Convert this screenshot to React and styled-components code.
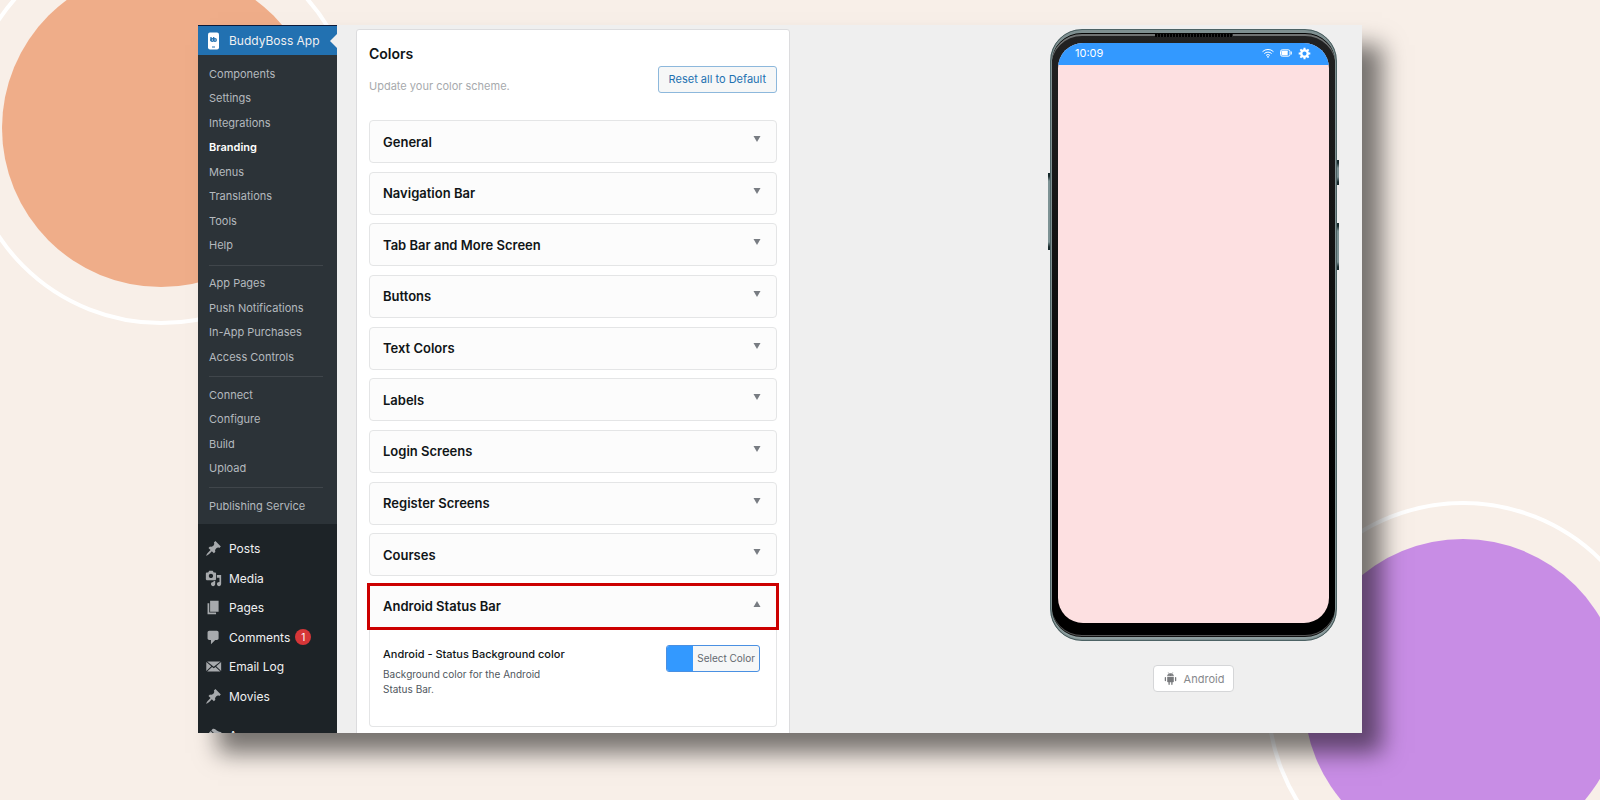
import React from "react";
import styled, { createGlobalStyle } from "styled-components";

const GlobalStyle = createGlobalStyle`
  * {
    box-sizing: border-box;
  }
  body {
    margin: 0;
    background: #f8efe8;
    font-family: Inter, "Liberation Sans", sans-serif;
  }
  ul,
  h2,
  h3,
  p {
    margin: 0;
    padding: 0;
    list-style: none;
  }
  a {
    color: inherit;
    text-decoration: none;
  }
  button {
    font-family: inherit;
    cursor: pointer;
  }
`;

const Page = styled.div`
  position: relative;
  display: flex;
  height: 100vh;
  padding: 25px 238px 67px 198px;
  overflow: hidden;
`;

const Backdrop = styled.svg`
  position: absolute;
  width: 394px;
  height: 394px;
  ${({ $corner }) =>
    $corner === "top" ? "left: -36px; top: -69px;" : "right: -60px; bottom: -95px;"}
`;

const Window = styled.div`
  position: relative;
  display: flex;
  flex: 1;
  min-width: 0;
  background: #efefef;
  box-shadow: 20px 20px 22px rgba(0, 0, 0, 0.52);
`;

const Sidebar = styled.nav`
  flex: none;
  width: 139px;
  overflow: hidden;
  border-top: 1px solid #0b1a3a;
  background: #1d2327;
  color: #f0f0f1;
`;

const CurrentItem = styled.a`
  position: relative;
  display: flex;
  align-items: center;
  gap: 9px;
  height: 29px;
  padding-left: 9px;
  background: #2271b1;
  font-size: 12px;
  &::after {
    content: "";
    position: absolute;
    right: 0;
    border: 7px solid transparent;
    border-right-color: #efefef;
    border-left: 0;
  }
`;

const Submenu = styled.ul`
  display: flex;
  flex-direction: column;
  justify-content: space-between;
  min-height: 469px;
  padding: 7px 14px 6px 11px;
  background: #2c3338;
  font-size: 11px;
  line-height: 24px;
`;

const SubmenuItem = styled.li`
  color: ${({ $current }) => ($current ? "#fff" : "#b4b9be")};
  font-weight: ${({ $current }) => ($current ? 600 : 400)};
`;

const Divider = styled.li`
  height: 1px;
  margin: 7px 0 5px;
  background: #40464b;
`;

const Menu = styled.ul`
  display: flex;
  flex-direction: column;
  justify-content: space-between;
  min-height: 177px;
  margin-top: 10px;
  padding-left: 7px;
  font-size: 12px;
  line-height: 29px;
`;

const NextMenu = styled(Menu)`
  justify-content: flex-start;
  min-height: 0;
`;

const MenuLink = styled.a`
  display: flex;
  align-items: center;
`;

const MenuIcon = styled.svg`
  width: 17px;
  height: 17px;
  margin-right: 7px;
  fill: #a7aaad;
`;

const Badge = styled.span`
  width: 16px;
  height: 16px;
  margin-left: 5px;
  border-radius: 8px;
  background: #d63638;
  color: #fff;
  font-size: 10px;
  line-height: 16px;
  text-align: center;
`;

const Main = styled.main`
  display: flex;
  flex: 1;
  justify-content: space-between;
  min-width: 0;
  padding: 4px 25px 0 19px;
  overflow: hidden;
`;

const Panel = styled.section`
  flex: 0 1 434px;
  height: 760px;
  padding: 13px 12px;
  border: 1px solid #dcdcde;
  border-radius: 3px;
  background: #fff;
  color: #101517;
`;

const PanelHeader = styled.header`
  display: flex;
  align-items: center;
  justify-content: space-between;
  margin-bottom: 25px;
`;

const PanelTitle = styled.h2`
  font-size: 14px;
  font-weight: 600;
  line-height: 22px;
`;

const PanelHint = styled.p`
  margin-top: 12px;
  color: #a7aaad;
  font-size: 11px;
  line-height: 18px;
`;

const ResetButton = styled.button`
  height: 27px;
  margin-top: 20px;
  padding: 0 10px;
  border: 1px solid #8db8dc;
  border-radius: 3px;
  background: #f6f7f7;
  color: #2271b1;
  font-size: 11px;
`;

const Sections = styled.div`
  display: flex;
  flex-direction: column;
  justify-content: space-between;
  min-height: 508px;
`;

const SectionHeader = styled.button`
  display: flex;
  align-items: center;
  justify-content: space-between;
  height: 43px;
  padding: 0 15px 0 13px;
  border: 1px solid #e4e5e6;
  border-radius: ${({ $open }) => ($open ? 0 : 4)}px;
  background: #fcfcfc;
  color: #101517;
  font-size: 13px;
  font-weight: 600;
  text-align: left;
  outline: ${({ $open }) => ($open ? "3px solid #cc0000" : "none")};
  outline-offset: -1px;
`;

const Caret = styled.svg`
  width: 8px;
  height: 12px;
  margin-bottom: 5px;
  fill: #787c82;
`;

const SectionBody = styled.div`
  display: flex;
  align-items: flex-start;
  justify-content: space-between;
  min-height: 99px;
  padding: 17px 16px 16px 13px;
  border: 1px solid #e4e5e6;
  border-top: 0;
  border-radius: 0 0 4px 4px;
`;

const OptionTitle = styled.h3`
  font-size: 11px;
  font-weight: 500;
  line-height: 18px;
`;

const OptionHint = styled.p`
  max-width: 170px;
  margin-top: 4px;
  color: #50575e;
  font-size: 10px;
  line-height: 15px;
`;

const ColorButton = styled.button`
  display: flex;
  height: 27px;
  padding: 0;
  border: 1px solid #4a90e2;
  border-radius: 3px;
  overflow: hidden;
  background: #f6f7f7;
  color: #646970;
  font-size: 10px;
  line-height: 25px;
`;

const Swatch = styled.span`
  align-self: stretch;
  width: 26px;
  margin-right: 4px;
  background: #3399ff;
`;

const ColorLabel = styled.span`
  padding-right: 4px;
`;

const Preview = styled.aside`
  display: flex;
  flex: none;
  flex-direction: column;
  align-items: center;
`;

const Phone = styled.div`
  position: relative;
  width: 287px;
  height: 612px;
  padding: 13px 7px 17px;
  border: 1px solid #4c6264;
  border-radius: 32px;
  background: linear-gradient(#222, #151515 30%, #000 80%);
  box-shadow: inset 0 0 0 1px #7f9091, inset 0 3px 0 #7f9091,
    inset 0 4px 0 #050505, inset 0 6px 0 #6f7272, inset 0 -3px 0 #8fa0a1,
    inset 0 -4px 0 #111, inset 0 -5px 0 #555;
`;

const Speaker = styled.span`
  position: absolute;
  top: 4px;
  left: 50%;
  width: 78px;
  height: 3px;
  margin-left: -39px;
  background: repeating-linear-gradient(90deg, #000 0 2px, #2a2a2a 2px 3px);
`;

const SideKey = styled.span`
  position: absolute;
  top: ${({ $top }) => $top}px;
  ${({ $side }) => $side}: -3px;
  width: 2px;
  height: ${({ $length }) => $length}px;
  background: linear-gradient(#16292b 3px, #7d9294 8px calc(100% - 8px), #16292b calc(100% - 3px));
`;

const Screen = styled.div`
  height: 100%;
  border-radius: 25px;
  overflow: hidden;
  background: #fde0e1;
`;

const StatusBar = styled.div`
  display: flex;
  align-items: center;
  gap: 6px;
  height: 22px;
  padding: 0 18px 2px 17px;
  background: #3399ff;
  color: #fff;
  font-size: 11px;
`;

const Clock = styled.span`
  flex: 1;
`;

const PlatformButton = styled.button`
  display: flex;
  align-items: center;
  gap: 7px;
  height: 27px;
  margin-top: 24px;
  padding: 0 9px 0 10px;
  border: 1px solid #d5d6d8;
  border-radius: 4px;
  background: #fff;
  color: #87898c;
  font-size: 11px;
`;

const icons = {
  pin: "M10.44 3.02l1.82-1.82 6.36 6.35-1.83 1.82c-1.05-.68-2.48-.57-3.41.36l-.75.75c-.92.93-1.04 2.35-.35 3.41l-1.83 1.82-2.41-2.41-2.8 2.79c-.42.42-3.38 2.71-3.8 2.29s1.86-3.39 2.28-3.81l2.79-2.79L4.1 9.36l1.83-1.82c1.05.69 2.48.57 3.4-.36l.75-.75c.93-.92 1.05-2.35.36-3.41z",
  media:
    "M13 11V4c0-.55-.45-1-1-1h-1.67L9 1H5L3.67 3H2c-.55 0-1 .45-1 1v7c0 .55.45 1 1 1h10c.55 0 1-.45 1-1zM7 4.5c1.38 0 2.5 1.12 2.5 2.5S8.38 9.5 7 9.5 4.5 8.38 4.5 7 5.62 4.5 7 4.5zM14 6h5v10.5c0 1.38-1.12 2.5-2.5 2.5S14 17.88 14 16.5s1.12-2.5 2.5-2.5c.17 0 .34.02.5.05V9h-3V6zm-4 8.05V13h2v3.5c0 1.38-1.12 2.5-2.5 2.5S7 17.88 7 16.5 8.12 14 9.5 14c.17 0 .34.02.5.05z",
  pages: "M6 15V2h10v13H6zm-1 1h8v2H3V5h2v11z",
  comments:
    "M5 2h9c1.1 0 2 .9 2 2v7c0 1.1-.9 2-2 2h-2l-5 5v-5H5c-1.1 0-2-.9-2-2V4c0-1.1.9-2 2-2z",
  email:
    "M2.500 4h15.600L10.300 10.400zM1.500 4.800L7.400 9.800 1.500 15.200zM19 4.800v10.400L13.200 9.800zM8.300 10.500l2 1.700 2-1.700 5.800 5.500H2.500z",
  appearance:
    "M14.48 11.06L7.41 3.99l1.5-1.5c.5-.56 2.3-.47 3.51.32 1.21.8 1.43 1.28 2.91 2.1 1.18.64 2.45 1.26 4.45.85zm-.71.71L6.7 4.7 4.93 6.47c-.39.39-.39 1.02 0 1.41l1.06 1.06c.39.39.39 1.03 0 1.42-.6.6-1.43 1.11-2.21 1.69-.35.26-.7.53-1.01.84C1.43 14.23.4 16.08 1.4 17.07c.99 1 2.84-.03 4.18-1.36.31-.31.58-.66.85-1.02.57-.78 1.08-1.61 1.69-2.21.39-.39 1.02-.39 1.41 0l1.06 1.06c.39.39 1.02.39 1.41 0z",
  gear: "M18 12h-2.180c-.17.7-.44 1.350-.81 1.930l1.540 1.540-2.100 2.100-1.540-1.540c-.58.36-1.230.63-1.910.79V19H8v-2.180c-.68-.16-1.330-.43-1.910-.79l-1.540 1.540-2.120-2.120 1.540-1.540c-.36-.58-.63-1.230-.79-1.910H1V9.030h2.170c.16-.7.44-1.350.8-1.940L2.430 5.550l2.100-2.100 1.540 1.540c.58-.37 1.240-.64 1.930-.81V2h3v2.180c.68.16 1.330.43 1.910.79l1.540-1.540 2.120 2.120-1.540 1.540c.36.59.64 1.240.8 1.940H18V12zm-8.500 1.500c1.660 0 3-1.340 3-3s-1.340-3-3-3-3 1.340-3 3 1.340 3 3 3z",
};

const submenuGroups = [
  [
    "Components",
    "Settings",
    "Integrations",
    "Branding",
    "Menus",
    "Translations",
    "Tools",
    "Help",
  ],
  ["App Pages", "Push Notifications", "In-App Purchases", "Access Controls"],
  ["Connect", "Configure", "Build", "Upload"],
  ["Publishing Service"],
];

const menuItems = [
  { label: "Posts", icon: "pin" },
  { label: "Media", icon: "media" },
  { label: "Pages", icon: "pages" },
  { label: "Comments", icon: "comments", count: 1 },
  { label: "Email Log", icon: "email" },
  { label: "Movies", icon: "pin" },
];

const sections = [
  "General",
  "Navigation Bar",
  "Tab Bar and More Screen",
  "Buttons",
  "Text Colors",
  "Labels",
  "Login Screens",
  "Register Screens",
  "Courses",
  "Android Status Bar",
];

const Circles = ({ corner, color }) => (
  <Backdrop $corner={corner} viewBox="0 0 394 394" aria-hidden="true">
    <circle cx="197" cy="197" r="195" fill="none" stroke="#fff" strokeWidth="4" />
    <circle cx="197" cy="197" r="159" fill={color} />
  </Backdrop>
);

const AppIcon = () => (
  <svg width="13" height="18" viewBox="0 0 13 18" aria-hidden="true">
    <rect x="1" y="0.5" width="11" height="17" rx="2" fill="#fff" />
    <g fill="none" stroke="#2271b1" strokeWidth="1.3">
      <path d="M4 5v4M6.700 5v4" />
      <circle cx="5.2" cy="8" r="1.3" />
      <circle cx="8" cy="8" r="1.3" />
    </g>
    <path d="M5 15h3" stroke="#2271b1" strokeWidth="1" />
  </svg>
);

const WifiIcon = () => (
  <svg width="12" height="10" viewBox="0 0 12 10" aria-hidden="true">
    <g fill="none" stroke="#fff" strokeLinecap="round">
      <path d="M.8 3.400a7.500 7.500 0 0 1 10.400 0" />
      <path d="M2.600 5.300a5 5 0 0 1 6.800 0" />
      <path d="M4.300 7.100a2.600 2.600 0 0 1 3.400 0" />
    </g>
    <circle cx="6" cy="8.800" r="0.900" fill="#fff" />
  </svg>
);

const BatteryIcon = () => (
  <svg width="12" height="8" viewBox="0 0 12 8" aria-hidden="true">
    <rect x="0.5" y="0.8" width="9.5" height="6.400" rx="1.800" fill="none" stroke="#fff" />
    <rect x="1.500" y="1.800" width="6.200" height="4.400" rx="0.500" fill="#fff" />
    <path d="M11.300 2.500v3" stroke="#fff" />
  </svg>
);

const GearIcon = () => (
  <svg width="13" height="13" viewBox="0 1 19 19" aria-hidden="true">
    <path d={icons.gear} fill="#fff" />
  </svg>
);

const RobotIcon = () => (
  <svg width="13" height="13" viewBox="0 0 13 13" fill="#77797c" aria-hidden="true">
    <path d="M3.200 4.300c0-1.900 1.300-3 3.300-3s3.300 1.100 3.300 3z" />
    <path d="M3.200 4.900h6.600v4.600a.8.8 0 0 1-.8.8H4a.8.8 0 0 1-.8-.8z" />
    <path
      d="M1.400 5.600v3M11.600 5.600v3M5.100 10v2.300M7.900 10v2.300"
      fill="none"
      stroke="#77797c"
      strokeWidth="1.300"
      strokeLinecap="round"
    />
    <path d="M4.200.4l.8 1.300M8.800.4L8 1.700" stroke="#77797c" strokeWidth="0.600" />
    <circle cx="5" cy="3" r="0.400" fill="#fff" />
    <circle cx="8" cy="3" r="0.400" fill="#fff" />
  </svg>
);

const MenuEntry = ({ label, icon, count }) => (
  <li>
    <MenuLink href="#">
      <MenuIcon viewBox="0 0 20 20" aria-hidden="true">
        <path d={icons[icon]} />
      </MenuIcon>
      {label}
      {count && <Badge>{count}</Badge>}
    </MenuLink>
  </li>
);

const AdminMenu = () => (
  <Sidebar>
    <CurrentItem href="#">
      <AppIcon />
      BuddyBoss App
    </CurrentItem>
    <Submenu>
      {submenuGroups.map((group, index) => (
        <React.Fragment key={group[0]}>
          {index > 0 && <Divider />}
          {group.map((label) => (
            <SubmenuItem key={label} $current={label === "Branding"}>
              <a href="#">{label}</a>
            </SubmenuItem>
          ))}
        </React.Fragment>
      ))}
    </Submenu>
    <Menu>
      {menuItems.map((item) => (
        <MenuEntry key={item.label} {...item} />
      ))}
    </Menu>
    <NextMenu>
      <MenuEntry label="Appearance" icon="appearance" />
    </NextMenu>
  </Sidebar>
);

const ColorsPanel = () => (
  <Panel>
    <PanelHeader>
      <div>
        <PanelTitle>Colors</PanelTitle>
        <PanelHint>Update your color scheme.</PanelHint>
      </div>
      <ResetButton type="button">Reset all to Default</ResetButton>
    </PanelHeader>
    <Sections>
      {sections.map((name) => {
        const open = name === "Android Status Bar";
        return (
          <SectionHeader key={name} type="button" $open={open} aria-expanded={open}>
            {name}
            <Caret viewBox="0 0 8 12" aria-hidden="true">
              <path d={open ? "M4 3l3.500 6h-7z" : "M.5 3h7L4 9z"} />
            </Caret>
          </SectionHeader>
        );
      })}
    </Sections>
    <SectionBody>
      <div>
        <OptionTitle>Android - Status Background color</OptionTitle>
        <OptionHint>Background color for the Android Status Bar.</OptionHint>
      </div>
      <ColorButton type="button">
        <Swatch />
        <ColorLabel>Select Color</ColorLabel>
      </ColorButton>
    </SectionBody>
  </Panel>
);

const PhonePreview = () => (
  <Preview>
    <Phone>
      <Speaker />
      <SideKey $side="left" $top={143} $length={77} />
      <SideKey $side="right" $top={130} $length={25} />
      <SideKey $side="right" $top={193} $length={47} />
      <Screen>
        <StatusBar>
          <Clock>10:09</Clock>
          <WifiIcon />
          <BatteryIcon />
          <GearIcon />
        </StatusBar>
      </Screen>
    </Phone>
    <PlatformButton type="button">
      <RobotIcon />
      Android
    </PlatformButton>
  </Preview>
);

const App = () => (
  <>
    <GlobalStyle />
    <Page>
      <Circles corner="top" color="#efad89" />
      <Circles corner="bottom" color="#c88de5" />
      <Window>
        <AdminMenu />
        <Main>
          <ColorsPanel />
          <PhonePreview />
        </Main>
      </Window>
    </Page>
  </>
);

export default App;
